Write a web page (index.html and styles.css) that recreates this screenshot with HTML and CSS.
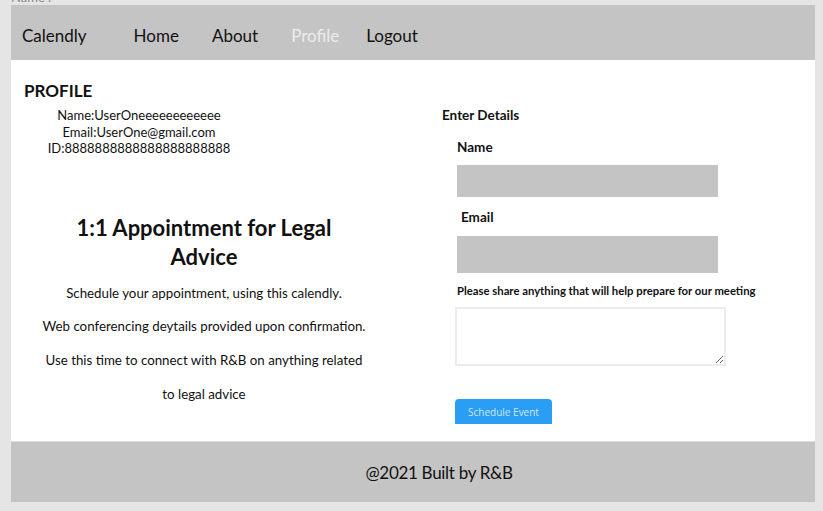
FILE: index.html
```html
<!DOCTYPE html>
<html>
<head>
<meta charset="utf-8">
<link rel="stylesheet" href="styles.css">
</head>
<body>
<div class="ghost"><span>Name :</span></div>
<div class="app">
  <nav class="nav">
    <span class="brand">Calendly</span>
    <span class="link">Home</span>
    <span class="link">About</span>
    <span class="link active">Profile</span>
    <span class="link">Logout</span>
  </nav>
  <main class="main">
    <section class="left">
      <h2 class="ptitle">PROFILE</h2>
      <div class="pinfo">
        <div>Name:UserOneeeeeeeeeeee</div>
        <div>Email:UserOne@gmail.com</div>
        <div>ID:8888888888888888888888</div>
      </div>
      <div class="appt">
        <h1 class="atitle">1:1 Appointment for Legal Advice</h1>
        <p>Schedule your appointment, using this calendly.</p>
        <p>Web conferencing deytails provided upon confirmation.</p>
        <p>Use this time to connect with R&amp;B on anything related</p>
        <p>to legal advice</p>
      </div>
    </section>
    <section class="right">
      <h3 class="ed">Enter Details</h3>
      <div class="form">
        <label class="lbl">Name</label>
        <div class="field"></div>
        <label class="lbl lbl-email">Email</label>
        <div class="field field2"></div>
        <label class="lbl small">Please share anything that will help prepare for our meeting</label>
        <textarea class="ta"></textarea>
        <button class="btn">Schedule Event</button>
      </div>
    </section>
  </main>
  <footer class="foot">@2021 Built by R&amp;B</footer>
</div>
</body>
</html>
```
FILE: styles.css
```css
* { box-sizing: border-box; }
html, body { margin: 0; padding: 0; }
body {
  background: #e5e5e5;
  font-family: Lato, "Open Sans", sans-serif;
  color: #111;
  width: 823px;
  height: 511px;
  overflow: hidden;
}
.ghost {
  height: 5px;
  overflow: hidden;
  padding-left: 11px;
  font-size: 13px;
  color: #8a8a8a;
}
.ghost span { display: block; margin-top: -10px; line-height: 14px; }
.app {
  margin-left: 11px;
  width: 804px;
  background: #fff;
}
.nav {
  height: 55px;
  background: #c4c4c4;
  display: flex;
  align-items: center;
  padding-left: 11px;
  font-size: 17px;
  padding-top: 5px;
}
.brand { margin-right: 47px; }
.link { margin-right: 33px; }
.active { color: #ececec; margin-right: 27px; }
.main {
  display: flex;
  height: 382px;
  border-bottom: 1px solid #dcdcdc;
}
.left { width: 400px; padding-left: 13px; padding-top: 20px; }
.ptitle { margin: 0; font-size: 17px; font-weight: 700; line-height: 22px; }
.pinfo {
  width: 230px;
  text-align: center;
  font-size: 13px;
  line-height: 16.5px;
  margin-top: 5px;
}
.appt { width: 360px; margin-top: 56px; text-align: center; font-size: 13.3px; }
.atitle { margin: 0 auto; width: 290px; font-size: 22px; font-weight: 700; line-height: 29px; }
.appt p { margin: 0; line-height: 33.7px; }
.appt .atitle + p { margin-top: 6px; }
.right { padding-left: 31px; padding-top: 46px; flex: 1; }
.ed { margin: 0; font-size: 13.5px; font-weight: 700; line-height: 18px; }
.form { padding-left: 13px; padding-top: 14px; display: flex; flex-direction: column; align-items: flex-start; }
.lbl { font-size: 13.5px; font-weight: 700; line-height: 18px; margin-left: 2px; }
.lbl-email { margin-left: 6px; margin-top: 11px; }
.field { width: 261px; height: 32px; background: #c4c4c4; margin-left: 2px; margin-top: 9px; }
.field2 { height: 37px; margin-top: 10px; }
.small { font-size: 11.3px; margin-top: 9px; }
.ta {
  width: 271px; height: 59px; margin-top: 7px;
  border: 2px solid #ececec; resize: vertical; background: #fff;
}
.btn {
  margin-top: 33px;
  width: 97px; height: 25px;
  background: #2a9df4;
  border: none; border-radius: 4px 4px 0 0;
  color: #cfe6fb;
  font-family: "Open Sans", sans-serif;
  font-size: 10px;
  padding: 0;
}
.foot {
  height: 60px;
  background: #c4c4c4;
  display: flex; align-items: center; justify-content: center;
  padding-left: 52px;
  font-size: 17px;
  letter-spacing: -0.3px;
}
```
